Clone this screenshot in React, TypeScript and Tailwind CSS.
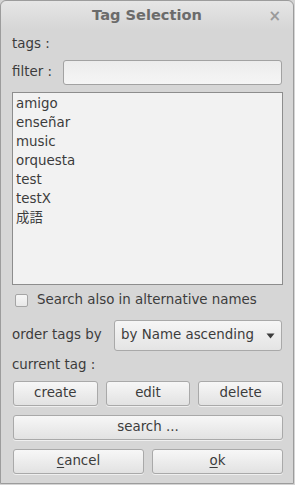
const tags = ['amigo', 'enseñar', 'music', 'orquesta', 'test', 'testX', '成語'];

const btn =
  'h-[25px] rounded-[3px] border border-[#a9a9a9] bg-gradient-to-b from-[#f7f7f7] to-[#e2e2e2] shadow-[0_1px_0_rgba(255,255,255,0.6)] text-[#3c3c3c] flex items-center justify-center';

export default function App() {
  return (
    <div
      className="w-[295px] h-[485px] bg-[#d4d4d4] text-[#3c3c3c] text-[13.4px] overflow-hidden"
      style={{ fontFamily: '"DejaVu Sans", "Noto Sans CJK JP", sans-serif' }}
    >
      <div className="w-[294px] h-[484px] border border-[#9c9c9c] rounded-t-[6px] bg-[#d6d6d6] flex flex-col">
        {/* Title bar */}
        <div className="h-[28px] rounded-t-[6px] bg-gradient-to-b from-[#e6e6e6] to-[#d6d6d6] flex items-center relative">
          <div className="flex-1 text-center font-bold text-[14.6px] text-[#6b6b6b]">Tag Selection</div>
          <span className="absolute right-[12px] top-[4px] text-[15px] font-bold text-[#9a9a9a]">×</span>
        </div>

        <div className="flex flex-col ml-[11px] w-[271px]">
          <div className="h-[16px] mt-[7px] flex items-center">tags :</div>

          <div className="flex items-center mt-[8px] h-[25px]">
            <span className="w-[51px]">filter :</span>
            <div className="w-[219px] h-[25px] rounded-[3px] border border-[#a2a2a2] bg-gradient-to-b from-[#ececec] to-[#f5f5f5]" />
          </div>

          {/* list */}
          <div className="mt-[7px] h-[193px] border border-[#8d8d8d] bg-[#f2f2f2] pl-[3px] pt-[1px] flex flex-col">
            {tags.map((t) => (
              <div key={t} className="h-[19px] leading-[19px]">
                {t}
              </div>
            ))}
          </div>

          <div className="flex items-center mt-[7px] h-[16px]">
            <div className="w-[13px] h-[13px] ml-[3px] rounded-[2px] border border-[#a5a5a5] bg-gradient-to-b from-[#f7f7f7] to-[#e8e8e8]" />
            <span className="ml-[9px]">Search also in alternative names</span>
          </div>

          <div className="flex items-center mt-[12px] h-[31px]">
            <span className="w-[102px]">order tags by</span>
            <div className="w-[168px] h-[31px] rounded-[3px] border border-[#a9a9a9] bg-gradient-to-b from-[#f6f6f6] to-[#e4e4e4] flex items-center pl-[6px] pr-[6px]">
              <span className="flex-1">by Name ascending</span>
              <svg width="9" height="6" viewBox="0 0 9 6">
                <path d="M0.5 0.5 L8.5 0.5 L4.5 5.5 Z" fill="#3c3c3c" />
              </svg>
            </div>
          </div>

          <div className="h-[16px] mt-[6px] flex items-center">current tag :</div>

          <div className="grid grid-cols-3 gap-[8px] mt-[8px] ml-[1px] w-[270px]">
            <div className={btn}>create</div>
            <div className={btn}>edit</div>
            <div className={btn}>delete</div>
          </div>

          <div className="mt-[9px] ml-[1px] w-[270px]">
            <div className={btn}>search ...</div>
          </div>

          <div className="grid grid-cols-2 gap-[8px] mt-[9px] ml-[1px] w-[270px]">
            <div className={btn}>
              <span>
                <span className="underline underline-offset-2">c</span>ancel
              </span>
            </div>
            <div className={btn}>
              <span>
                <span className="underline underline-offset-2">o</span>k
              </span>
            </div>
          </div>
        </div>
      </div>
    </div>
  );
}
